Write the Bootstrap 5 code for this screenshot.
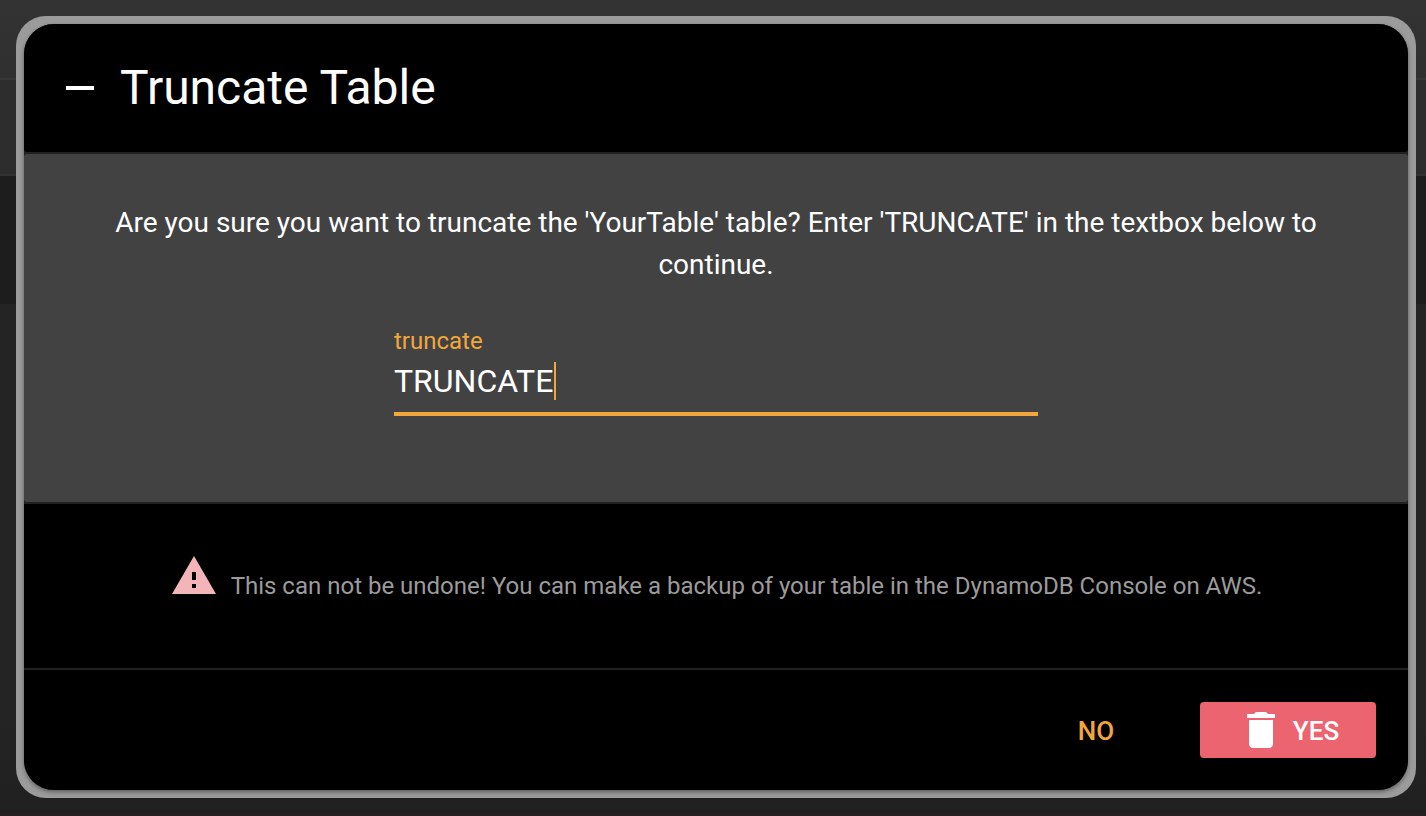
<!DOCTYPE html>
<html lang="en">
<head>
<meta charset="utf-8">
<meta name="viewport" content="width=device-width, initial-scale=1">
<title>Truncate Table</title>
<link href="https://cdn.jsdelivr.net/npm/bootstrap@5.3.0/dist/css/bootstrap.min.css" rel="stylesheet">
<style>
  body { font-family: Roboto, sans-serif; background: #242424; color: #fff; }
  .app-bar { height: 80px; background: linear-gradient(#333, #2f2f2f); border-bottom: 2px solid #373737; }
  .app-tabs { height: 96px; background: #2d2d2d; border-bottom: 2px solid #333; }
  .app-tools { height: 128px; background: #1d1d1d; }
  .app-page { background: linear-gradient(#242424 80%, #202020); border-bottom: 2px solid #261f22; }
  .overlay { padding: 16px 10px 18px 16px; }
  .frame { background: #9b9b9b; padding: 8px; border-radius: 30px; }
  .dialog { background: #212121; border-radius: 30px; overflow: hidden; box-shadow: 0 2px 4px rgba(0, 0, 0, .4); gap: 2px; }
  .pane { background: #000; }
  .dialog-head { height: 128px; padding: 0 32px; gap: 16px; border-radius: 0 0 3px 3px; }
  .dialog-head h1 { font-size: 48px; line-height: 56px; font-weight: 400; }
  .dialog-main { background: #424242; padding: 48px; border-radius: 3px; }
  .question { font-size: 28px; line-height: 42px; }
  .field { width: 50%; margin-top: 40px; }
  .field label { font-size: 24px; line-height: 30px; color: #f1a73c; }
  .field input { height: 60px; padding: 0 0 6px; font-size: 32px; color: #fff; border: 0; border-bottom: 4px solid #f1a73c; border-radius: 0; background: none; outline: 0; }
  .caret { position: absolute; left: 160px; bottom: 16px; width: 2px; height: 38px; background: #f1a73c; }
  .warning { height: 164px; font-size: 24px; line-height: 36px; color: #9b9b9b; gap: 13px; }
  .warning svg { margin-bottom: 20px; }
  .actions { height: 120px; padding: 0 32px; gap: 32px; }
  .act { height: 56px; padding: 0; border: 0; border-radius: 4px; font-size: 26px; font-weight: 500; }
  .act span { display: block; padding-top: 2px; }
  .act-no { width: 144px; background: none; color: #f1a73c; }
  .act-yes { width: 176px; background: #ed6471; color: #fff; gap: 8px; }
</style>
</head>
<body class="min-vh-100 d-flex flex-column position-relative">
  <div class="app-bar"></div>
  <div class="app-tabs"></div>
  <div class="app-tools"></div>
  <div class="app-page flex-grow-1"></div>

  <div class="overlay position-absolute top-0 start-0 w-100 h-100 d-flex">
    <div class="frame flex-grow-1 d-flex">
      <form class="dialog flex-grow-1 d-flex flex-column" role="dialog" aria-labelledby="heading">
        <header class="dialog-head pane d-flex align-items-center">
          <svg width="48" height="48" viewBox="0 0 24 24" fill="#fff" aria-hidden="true"><path d="M5 11h14v2H5z"/></svg>
          <h1 id="heading" class="m-0">Truncate Table</h1>
        </header>
        <main class="dialog-main flex-grow-1 d-flex flex-column align-items-center">
          <p class="question text-center m-0">Are you sure you want to truncate the 'YourTable' table? Enter 'TRUNCATE' in the textbox below to continue.</p>
          <div class="field position-relative">
            <label class="d-block" for="truncate">truncate</label>
            <input class="d-block w-100" id="truncate" type="text" value="TRUNCATE" autocomplete="off" spellcheck="false">
            <span class="caret" aria-hidden="true"></span>
          </div>
        </main>
        <div class="warning pane d-flex align-items-center justify-content-center">
          <svg width="48" height="48" viewBox="0 0 24 24" fill="#f4b5b8" aria-hidden="true"><path d="M1 21h22L12 2 1 21zm12-3h-2v-2h2v2zm0-4h-2v-4h2v4z"/></svg>
          <span>This can not be undone! You can make a backup of your table in the DynamoDB Console on AWS.</span>
        </div>
        <footer class="actions pane d-flex align-items-center justify-content-end">
          <button class="act act-no" type="button"><span>NO</span></button>
          <button class="act act-yes d-flex align-items-center justify-content-center" type="submit">
            <svg width="48" height="48" viewBox="0 0 24 24" fill="currentColor" aria-hidden="true"><path d="M6 19c0 1.100.9 2 2 2h8c1.100 0 2-.9 2-2V7H6v12zM19 4h-3.500l-1-1h-5l-1 1H5v2h14V4z"/></svg>
            <span>YES</span>
          </button>
        </footer>
      </form>
    </div>
  </div>
<script src="https://cdn.jsdelivr.net/npm/bootstrap@5.3.0/dist/js/bootstrap.bundle.min.js"></script>
</body>
</html>
